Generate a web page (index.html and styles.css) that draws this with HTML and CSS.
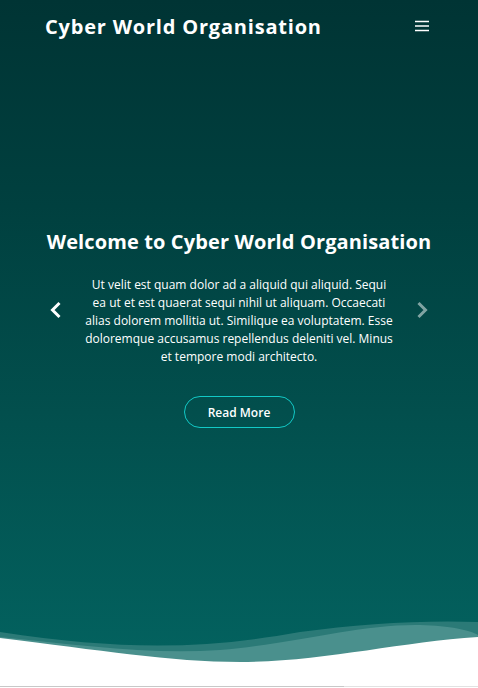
FILE: index.html
```html
<!DOCTYPE html>
<html lang="en">
<head>
<meta charset="utf-8">
<title>Cyber World Organisation</title>
<link rel="stylesheet" href="styles.css">
</head>
<body>
<section class="hero">
  <header class="topbar">
    <a class="logo" href="#">Cyber World Organisation</a>
    <button class="menu" aria-label="Menu">
      <svg width="16" height="14" viewBox="0 0 16 14"><path d="M1 2.5h14M1 7h14M1 11.5h14" stroke="#fff" stroke-width="1.3" fill="none"/></svg>
    </button>
  </header>
  <div class="carousel">
    <h2 class="title">Welcome to Cyber World Organisation</h2>
    <div class="slide">
      <button class="arrow prev" aria-label="Previous">
        <svg width="12" height="18" viewBox="0 0 12 18"><path d="M9.5 2L2.5 9l7 7" stroke="#fff" stroke-width="3" fill="none"/></svg>
      </button>
      <p class="text">Ut velit est quam dolor ad a aliquid qui aliquid. Sequi ea ut et est quaerat sequi nihil ut aliquam. Occaecati alias dolorem mollitia ut. Similique ea voluptatem. Esse doloremque accusamus repellendus deleniti vel. Minus et tempore modi architecto.</p>
      <button class="arrow next" aria-label="Next">
        <svg width="12" height="18" viewBox="0 0 12 18"><path d="M2.5 2L9.5 9l-7 7" stroke="#fff" stroke-width="3" fill="none"/></svg>
      </button>
    </div>
    <a class="btn" href="#">Read More</a>
  </div>
  <svg class="waves" viewBox="0 0 478 76" preserveAspectRatio="none" width="478" height="76">
    <path d="M0,22 C120,40 200,40 300,22 C360,14 420,10 478,12 L478,76 L0,76 Z" fill="#2b7a77"/>
    <path d="M0,27 C80,35 150,45 220,40 C300,33 360,14 420,15 C450,16 470,20 478,25 L478,76 L0,76 Z" fill="#4a908d"/>
    <path d="M0,28 C100,40 170,52 240,52 C320,52 400,32 478,27 L478,76 L0,76 Z" fill="#ffffff"/>
  </svg>
</section>
<div class="below"><span class="below-a"></span><span class="below-b"></span></div>
</body>
</html>
```
FILE: styles.css
```css
html, body { margin: 0; padding: 0; }
body { font-family: "Open Sans", "Noto Sans", sans-serif; background: #fff; overflow: hidden; }
.hero {
  position: relative;
  height: 686px;
  background: linear-gradient(180deg, #003434 0%, #00403f 30%, #024f4d 60%, #036461 100%);
  overflow: hidden;
}
.topbar {
  display: flex;
  align-items: center;
  justify-content: space-between;
  height: 52px;
  padding: 0 48px 0 45px;
}
.logo {
  color: #fff;
  text-decoration: none;
  font-family: "Open Sans", sans-serif;
  font-weight: 700;
  font-size: 20px;
  letter-spacing: 0.8px;
}
.menu { background: none; border: 0; padding: 0; display: flex; }
.carousel {
  display: flex;
  flex-direction: column;
  align-items: center;
  padding-top: 176px;
}
.title {
  margin: 0;
  color: #fff;
  font-family: "Open Sans", sans-serif;
  font-weight: 700;
  font-size: 20px;
  line-height: 28px;
  letter-spacing: 0.12px;
}
.slide {
  display: flex;
  align-items: flex-start;
  justify-content: space-between;
  width: 378px;
  margin-top: 20px;
}
.arrow { background: none; border: 0; padding: 0; display: flex; width: 12px; margin-top: 25px; }
.next { opacity: 0.5; }
.text {
  margin: 0;
  width: 309px;
  text-align: center;
  color: #fff;
  font-size: 12px;
  line-height: 18px;
}
.btn {
  margin-top: 30px;
  width: 109px;
  height: 30px;
  border: 1px solid #12c9c6;
  border-radius: 16px;
  display: flex;
  align-items: center;
  justify-content: center;
  color: #fff;
  text-decoration: none;
  font-size: 12px;
  font-weight: 600;
}
.waves { position: absolute; left: 0; bottom: 0; display: block; }
.below { display: flex; height: 2px; }
.below-a { width: 344px; border-top: 1px solid #c8c8c8; }
.below-b { flex: 1; border-top: 1px solid #e2e2e2; }
```
